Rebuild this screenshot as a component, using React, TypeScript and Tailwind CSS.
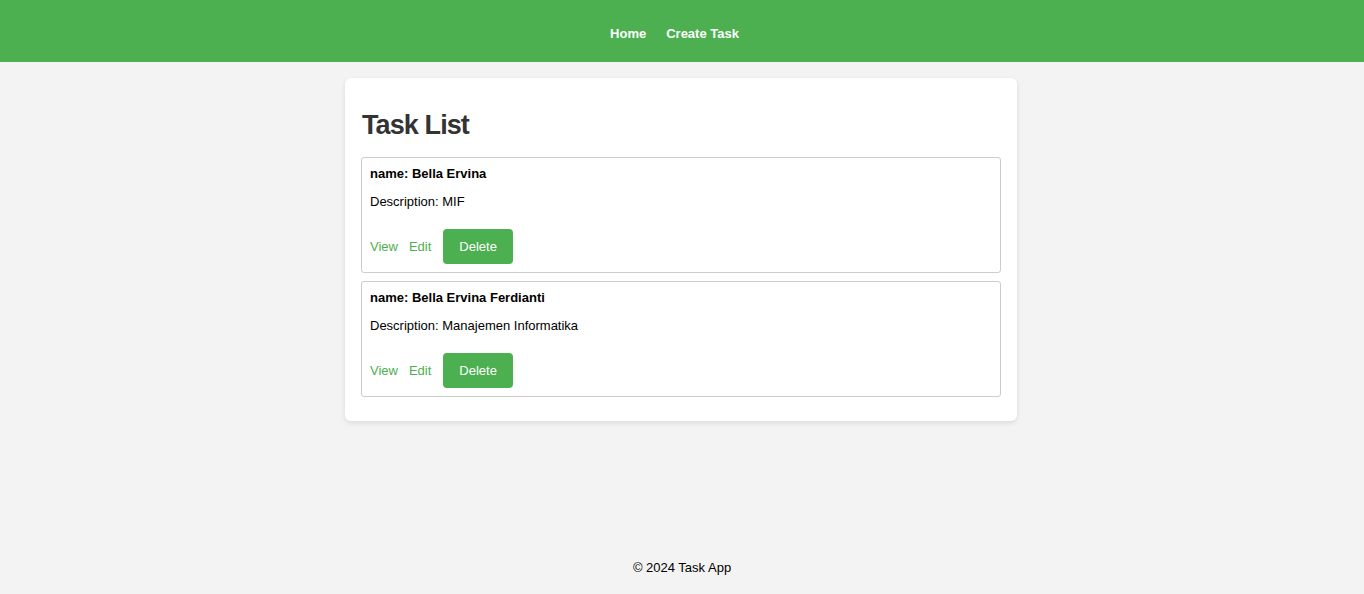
import React from "react";

const tasks = [
  { name: "Bella Ervina", description: "MIF" },
  { name: "Bella Ervina Ferdianti", description: "Manajemen Informatika" },
];

export default function App() {
  return (
    <div
      className="flex h-[594px] flex-col bg-[#f3f3f3] text-[13px] leading-[15px] text-black"
      style={{ fontFamily: '"Liberation Sans", Arial, sans-serif' }}
    >
      <header className="flex h-[62px] items-center justify-center bg-[#4caf50] pr-[15px] pt-[4px]">
        <nav className="flex items-center gap-[20px] font-bold text-white">
          <a href="#">Home</a>
          <a href="#">Create Task</a>
        </nav>
      </header>
      <main className="flex-1 pr-[2px]">
        <div className="mx-auto mt-[16px] w-[672px] rounded-[6px] bg-white px-[16px] pb-[24px] pt-[16px] shadow-[0_2px_5px_rgba(0,0,0,0.1)]">
          <h1 className="mb-[16px] mt-[16px] pl-[1px] text-[27px] font-bold leading-[31px] tracking-[-0.9px] text-[#333]">
            Task List
          </h1>
          <div className="flex flex-col gap-[8px]">
            {tasks.map((t) => (
              <div
                key={t.name}
                className="rounded-[3px] border border-[#ccc] px-[8px] pb-[8px] pt-[8px]"
              >
                <p className="font-bold">name: {t.name}</p>
                <p className="mt-[13px]">Description: {t.description}</p>
                <div className="mt-[20px] flex items-center">
                  <a href="#" className="mr-[11px] text-[#4caf50]">
                    View
                  </a>
                  <a href="#" className="mr-[12px] text-[#4caf50]">
                    Edit
                  </a>
                  <button className="h-[35px] rounded-[4px] bg-[#4caf50] px-[16px] text-white">
                    Delete
                  </button>
                </div>
              </div>
            ))}
          </div>
        </div>
      </main>
      <footer className="flex h-[54px] items-center justify-center">
        <p>© 2024 Task App</p>
      </footer>
    </div>
  );
}
